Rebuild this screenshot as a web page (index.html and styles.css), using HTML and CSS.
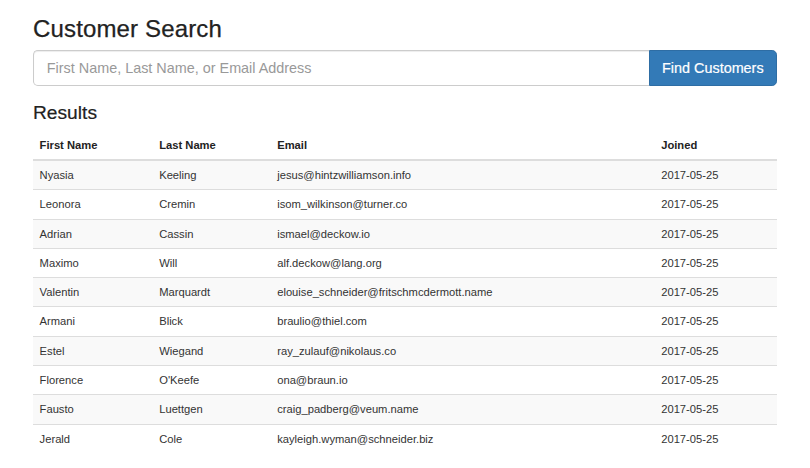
FILE: index.html
```html
<!DOCTYPE html>
<html lang="en">
<head>
<meta charset="utf-8">
<title>Customer Search</title>
<link rel="stylesheet" href="styles.css">
</head>
<body>
<div class="container">
  <h1 class="title">Customer Search</h1>
  <form class="search">
    <input class="search-input" type="text" placeholder="First Name, Last Name, or Email Address">
    <button class="search-btn" type="button">Find Customers</button>
  </form>
  <h3 class="results-title">Results</h3>
  <table class="results">
    <thead>
      <tr><th class="c1">First Name</th><th class="c2">Last Name</th><th class="c3">Email</th><th class="c4">Joined</th></tr>
    </thead>
    <tbody>
      <tr><td>Nyasia</td><td>Keeling</td><td>jesus@hintzwilliamson.info</td><td>2017-05-25</td></tr>
      <tr><td>Leonora</td><td>Cremin</td><td>isom_wilkinson@turner.co</td><td>2017-05-25</td></tr>
      <tr><td>Adrian</td><td>Cassin</td><td>ismael@deckow.io</td><td>2017-05-25</td></tr>
      <tr><td>Maximo</td><td>Will</td><td>alf.deckow@lang.org</td><td>2017-05-25</td></tr>
      <tr><td>Valentin</td><td>Marquardt</td><td>elouise_schneider@fritschmcdermott.name</td><td>2017-05-25</td></tr>
      <tr><td>Armani</td><td>Blick</td><td>braulio@thiel.com</td><td>2017-05-25</td></tr>
      <tr><td>Estel</td><td>Wiegand</td><td>ray_zulauf@nikolaus.co</td><td>2017-05-25</td></tr>
      <tr><td>Florence</td><td>O'Keefe</td><td>ona@braun.io</td><td>2017-05-25</td></tr>
      <tr><td>Fausto</td><td>Luettgen</td><td>craig_padberg@veum.name</td><td>2017-05-25</td></tr>
      <tr><td>Jerald</td><td>Cole</td><td>kayleigh.wyman@schneider.biz</td><td>2017-05-25</td></tr>
    </tbody>
  </table>
</div>
</body>
</html>
```
FILE: styles.css
```css
* { box-sizing: border-box; }
html, body { margin: 0; padding: 0; background: #fff; }
body {
  font-family: "Liberation Sans", Arial, Helvetica, sans-serif;
  color: #333;
  font-size: 11.2px;
}
.container {
  width: 743.7px;
  margin-left: 33px;
}
.title {
  font-size: 24px;
  font-weight: 500;
  line-height: 26.4px;
  margin: 16px 0 7.6px;
  color: #222;
  letter-spacing: 0.15px;
  -webkit-text-stroke: 0.25px #222;
}
.search {
  display: flex;
  height: 36px;
  margin: 0;
}
.search-input {
  flex: 1;
  min-width: 0;
  height: 36px;
  border: 1px solid #ccc;
  border-right: 0;
  border-radius: 4.8px 0 0 4.8px;
  padding: 0 12.8px;
  font-family: inherit;
  font-size: 14.4px;
  color: #555;
  box-shadow: inset 0 1px 1px rgba(0,0,0,.075);
  outline: none;
}
.search-input::placeholder { color: #999; }
.search-btn {
  width: 127.7px;
  height: 36px;
  border: 1px solid #2e6da4;
  border-radius: 0 4.8px 4.8px 0;
  background: #337ab7;
  color: #fff;
  font-family: inherit;
  font-size: 14.4px;
  padding: 0;
  text-align: center;
  -webkit-text-stroke: 0.2px #fff;
}
.results-title {
  font-size: 19.2px;
  font-weight: 500;
  line-height: 21.12px;
  margin: 15.8px 0 7.6px;
  color: #222;
  -webkit-text-stroke: 0.2px #222;
}
.results {
  width: 100%;
  border-collapse: separate;
  border-spacing: 0;
  table-layout: fixed;
}
.results th, .results td {
  text-align: left;
  padding: 6px 6.6px;
  line-height: 16.33px;
  white-space: nowrap;
}
.results th {
  font-weight: 700;
  color: #222;
  border-bottom: 2px solid #ddd;
}
.results .c1 { width: 119.6px; }
.results .c2 { width: 118px; }
.results .c3 { width: 384px; }
.results tbody tr + tr td { border-top: 1px solid #ddd; }
.results tbody tr:nth-child(odd) td { background: #f9f9f9; }
```
